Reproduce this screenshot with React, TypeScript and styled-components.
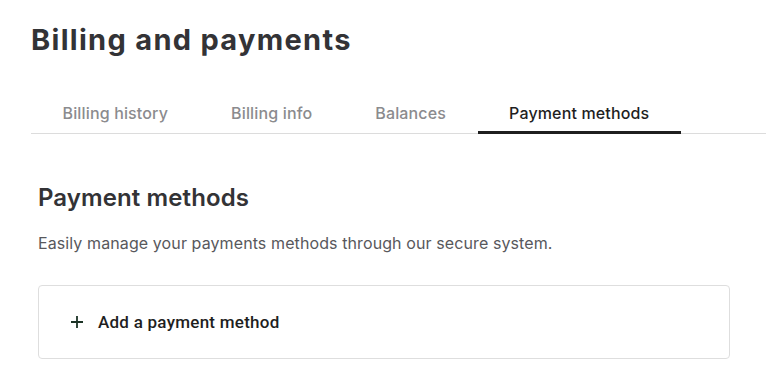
import React from "react";
import styled, { createGlobalStyle } from "styled-components";

const Global = createGlobalStyle`
  html, body { margin: 0; padding: 0; background: #fff; }
  body { font-family: Inter, "Noto Sans", sans-serif; -webkit-font-smoothing: antialiased; }
`;

const Page = styled.div`
  padding: 22px 0 0 31px;
  width: 735px;
`;

const Title = styled.h1`
  margin: 0;
  font-size: 29px;
  line-height: 36px;
  font-weight: 700;
  color: #333336;
  letter-spacing: 1.3px;
`;

const TabBar = styled.div`
  display: flex;
  margin-top: 44px;
  border-bottom: 1px solid #dcdcdc;
`;

const Tab = styled.button<{ $active?: boolean }>`
  appearance: none;
  background: none;
  border: none;
  margin: 0 0 -1px 0;
  padding: 0 31.5px 7px;
  font-family: inherit;
  font-size: 16px;
  line-height: 22px;
  font-weight: 500;
  letter-spacing: 0.15px;
  color: ${(p) => (p.$active ? "#1f1f1f" : "#8b8b8e")};
  border-bottom: 3px solid ${(p) => (p.$active ? "#1f1f1f" : "transparent")};
  cursor: pointer;
`;

const Section = styled.section`
  padding: 49px 0 0 7px;
  width: 692px;
`;

const SectionTitle = styled.h2`
  margin: 0;
  font-size: 24px;
  line-height: 30px;
  font-weight: 600;
  letter-spacing: 0.1px;
  color: #333336;
`;

const Description = styled.p`
  margin: 19px 0 0;
  font-size: 16px;
  line-height: 22px;
  letter-spacing: 0.1px;
  color: #58585c;
`;

const Card = styled.div`
  margin-top: 31px;
  border: 1px solid #dedede;
  border-radius: 4px;
  height: 74px;
  display: flex;
  align-items: center;
  padding: 0 32px;
  box-sizing: border-box;
`;

const AddButton = styled.button`
  appearance: none;
  background: none;
  border: none;
  padding: 0;
  display: flex;
  align-items: center;
  gap: 15px;
  font-family: Roboto, "Liberation Sans", sans-serif;
  font-size: 17px;
  font-weight: 500;
  letter-spacing: 0.25px;
  color: #1f1f1f;
  cursor: pointer;
`;

const PlusIcon = () => (
  <svg width="12" height="12" viewBox="0 0 12 12" aria-hidden>
    <path d="M6 0v12M0 6h12" stroke="#1c3326" strokeWidth="1.8" />
  </svg>
);

export default function App() {
  const tabs = ["Billing history", "Billing info", "Balances", "Payment methods"];
  return (
    <>
      <Global />
      <Page>
        <Title>Billing and payments</Title>
        <TabBar>
          {tabs.map((t) => (
            <Tab key={t} $active={t === "Payment methods"}>
              {t}
            </Tab>
          ))}
        </TabBar>
        <Section>
          <SectionTitle>Payment methods</SectionTitle>
          <Description>
            Easily manage your payments methods through our secure system.
          </Description>
          <Card>
            <AddButton>
              <PlusIcon />
              Add a payment method
            </AddButton>
          </Card>
        </Section>
      </Page>
    </>
  );
}
